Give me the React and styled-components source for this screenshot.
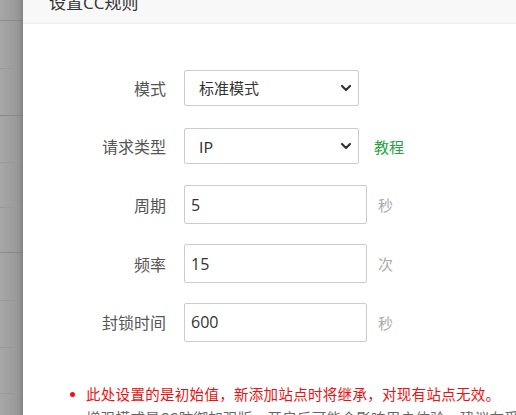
import React from "react";
import styled, { createGlobalStyle } from "styled-components";

const Global = createGlobalStyle`
  html, body { margin: 0; padding: 0; }
  body {
    width: 516px; height: 415px; overflow: hidden;
    font-family: "Open Sans", "Noto Sans CJK SC", sans-serif;
    background: #fff;
  }
`;

const Page = styled.div`
  position: relative;
  width: 516px;
  height: 415px;
  overflow: hidden;
  display: flex;
`;

const Backdrop = styled.div`
  width: 23px;
  flex: none;
  height: 100%;
  background: linear-gradient(to right, #a7a7a7, #949494);
  display: flex;
  flex-direction: column;
`;

const BgRow = styled.div`
  height: ${(p) => p.$h}px;
  flex: none;
  border-bottom: 1px solid ${(p) => (p.$dark ? "#8a8a8a" : "#999")};
`;

const Dialog = styled.div`
  position: absolute;
  left: 23px;
  top: -18px;
  width: 520px;
  height: 460px;
  background: #fff;
  box-shadow: 0 0 6px rgba(0, 0, 0, 0.25);
  display: flex;
  flex-direction: column;
`;

const Header = styled.div`
  height: 42px;
  box-sizing: border-box;
  background: #f8f8f8;
  border-bottom: 1px solid #eee;
  padding-left: 26px;
  font-size: 17px;
  line-height: 41px;
  color: #333;
  flex: none;
  font-family: "Open Sans", "Noto Sans CJK SC", sans-serif;
`;

const Body = styled.div`
  padding-top: 44px;
  display: flex;
  flex-direction: column;
`;

const Row = styled.div`
  display: flex;
  align-items: center;
  height: 39px;
  margin-bottom: 19.7px;
`;

const Label = styled.div`
  width: 143px;
  flex: none;
  text-align: right;
  font-size: 16px;
  color: #555;
  margin-right: 18px;
  font-family: "Noto Sans CJK SC", sans-serif;
`;

const SelectBox = styled.div`
  width: 175px;
  height: 36px;
  box-sizing: border-box;
  border: 1px solid #ccc;
  border-radius: 2px;
  display: flex;
  align-items: center;
  justify-content: space-between;
  padding: 0 6px 0 14px;
  font-size: 15px;
  color: #333;
  font-family: "Noto Sans CJK SC", sans-serif;
`;

const Input = styled.input`
  width: 183px;
  height: 39px;
  box-sizing: border-box;
  border: 1px solid #ccc;
  border-radius: 2px;
  padding: 0 6px;
  font-size: 16px;
  color: #333;
  font-family: "Open Sans", "Noto Sans CJK SC", sans-serif;
  outline: none;
  background: #fff;
`;

const Unit = styled.span`
  margin-left: 11px;
  font-size: 15px;
  color: #aaa;
  font-family: "Noto Sans CJK SC", sans-serif;
`;

const Link = styled.a`
  margin-left: 15px;
  font-size: 15px;
  color: #20a53a;
  text-decoration: none;
  font-family: "Noto Sans CJK SC", sans-serif;
`;

const Notes = styled.ul`
  margin: 23px 0 0 0;
  padding: 0 0 0 63px;
  list-style: none;
  display: flex;
  flex-direction: column;
  gap: 4px;
`;

const Note = styled.li`
  position: relative;
  font-size: 14.5px;
  letter-spacing: 0.3px;
  line-height: 20px;
  color: ${(p) => (p.$red ? "#ef1010" : "#666")};
  font-family: "Noto Sans CJK SC", sans-serif;
  white-space: nowrap;
  &::before {
    content: "";
    position: absolute;
    left: -16px;
    top: 8px;
    width: 5px;
    height: 5px;
    border-radius: 50%;
    background: currentColor;
  }
`;

const Chevron = () => (
  <svg width="12" height="12" viewBox="0 0 12 12">
    <path d="M2 4 L6 8 L10 4" fill="none" stroke="#333" strokeWidth="2.2" strokeLinecap="round" strokeLinejoin="round" />
  </svg>
);

const bgRows = [
  { h: 20, dark: true },
  { h: 47 },
  { h: 46, dark: true },
  { h: 46 },
  { h: 44 },
  { h: 44, dark: true },
  { h: 47 },
  { h: 46 },
  { h: 45 },
];

export default function App() {
  return (
    <Page>
      <Global />
      <Backdrop>
        {bgRows.map((r, i) => (
          <BgRow key={i} $h={r.h} $dark={r.dark} />
        ))}
      </Backdrop>
      <Dialog>
        <Header>设置CC规则</Header>
        <Body>
          <Row>
            <Label>模式</Label>
            <SelectBox>
              <span>标准模式</span>
              <Chevron />
            </SelectBox>
          </Row>
          <Row>
            <Label>请求类型</Label>
            <SelectBox>
              <span>IP</span>
              <Chevron />
            </SelectBox>
            <Link href="#">教程</Link>
          </Row>
          <Row>
            <Label>周期</Label>
            <Input defaultValue="5" />
            <Unit>秒</Unit>
          </Row>
          <Row>
            <Label>频率</Label>
            <Input defaultValue="15" />
            <Unit>次</Unit>
          </Row>
          <Row>
            <Label>封锁时间</Label>
            <Input defaultValue="600" />
            <Unit>秒</Unit>
          </Row>
          <Notes>
            <Note $red>此处设置的是初始值，新添加站点时将继承，对现有站点无效。</Note>
            <Note>增强模式是CC防御加强版，开启后可能会影响用户体验，建议在受到CC攻击时开启。</Note>
          </Notes>
        </Body>
      </Dialog>
    </Page>
  );
}
